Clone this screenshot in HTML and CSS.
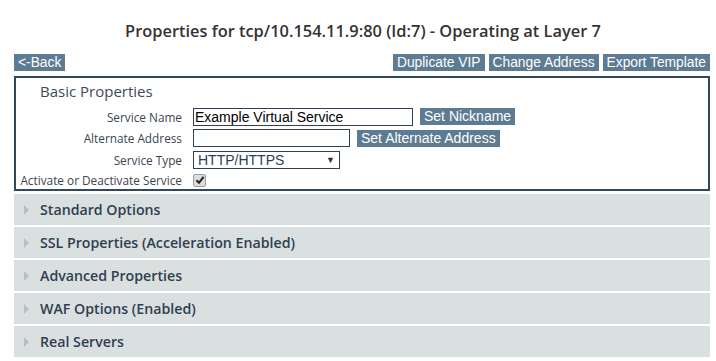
FILE: index.html
```html
<!DOCTYPE html>
<html>
<head>
<meta charset="utf-8">
<link rel="stylesheet" href="styles.css">
</head>
<body>
<div class="page">
  <h1 class="title">Properties for tcp/10.154.11.9:80 (Id:7) - Operating at Layer 7</h1>
  <div class="toolbar">
    <button class="btn">&lt;-Back</button>
    <div class="toolbar-right">
      <button class="btn">Duplicate VIP</button>
      <button class="btn">Change Address</button>
      <button class="btn">Export Template</button>
    </div>
  </div>
  <div class="box">
    <div class="box-title">Basic Properties</div>
    <div class="form">
      <div class="label">Service Name</div>
      <div class="ctrl"><div class="input w-name">Example Virtual Service</div><button class="btn btn-sm">Set Nickname</button></div>
      <div class="label">Alternate Address</div>
      <div class="ctrl"><div class="input w-alt"></div><button class="btn btn-sm">Set Alternate Address</button></div>
      <div class="label">Service Type</div>
      <div class="ctrl"><div class="select"><span>HTTP/HTTPS</span><span class="arrow">&#9660;</span></div></div>
      <div class="label">Activate or Deactivate Service</div>
      <div class="ctrl"><span class="checkbox"><svg width="10" height="10" viewBox="0 0 10 10"><path d="M1.5 5.2 L4 7.8 L8.6 1.8" fill="none" stroke="#222" stroke-width="2"/></svg></span></div>
    </div>
  </div>
  <div class="acc">
    <div class="acc-item"><span class="tri"></span>Standard Options</div>
    <div class="acc-item"><span class="tri"></span>SSL Properties (Acceleration Enabled)</div>
    <div class="acc-item"><span class="tri"></span>Advanced Properties</div>
    <div class="acc-item"><span class="tri"></span>WAF Options (Enabled)</div>
    <div class="acc-item"><span class="tri"></span>Real Servers</div>
  </div>
</div>
</body>
</html>
```
FILE: styles.css
```css
html, body { margin: 0; padding: 0; background: #fff; }
.page { padding: 0 6px 0 14px; font-family: "Open Sans", "Noto Sans", sans-serif; }
.title {
  margin: 0; padding: 20px 0 0 2px; height: 34px;
  text-align: center; font-size: 16.4px; font-weight: 600; color: #333;
  line-height: 22px;
}
.btn {
  border: 0; margin: 0; padding: 0 4px; height: 17px; line-height: 17px;
  background: #5d7b93; color: #fff; font-family: "Liberation Sans", Arial, sans-serif;
  font-size: 13.8px; cursor: pointer;
}
.btn-sm { padding: 0 4px; font-size: 14px; }
.toolbar { display: flex; justify-content: space-between; height: 17px; }
.toolbar-right { display: flex; gap: 4px; }
.box {
  margin-top: 5px; border: 2px solid #33475a; height: 111px; box-sizing: content-box;
}
.box-title { padding: 3px 0 0 24px; height: 25px; font-size: 15px; color: #3c4a58; line-height: 20px; box-sizing: content-box; }
.form {
  display: grid; grid-template-columns: 166px 1fr; column-gap: 11px;
  grid-template-rows: 21px 22px 22px 18px; align-items: center;
}
.label { text-align: right; font-size: 11.8px; color: #3b4652; white-space: nowrap; }
.ctrl { display: flex; align-items: center; gap: 7px; }
.input {
  height: 16px; border: 1px solid #2f4152; font-family: "Liberation Sans", Arial, sans-serif;
  font-size: 14px; line-height: 16px; padding-left: 1px; color: #000; box-sizing: content-box;
}
.w-name { width: 217px; }
.w-alt { width: 154px; }
.select {
  border: 1px solid #2f4152; display: flex; justify-content: space-between;
  align-items: center; font-family: "Liberation Sans", Arial, sans-serif; font-size: 14px; color: #2c3e52;
  padding-left: 4px; box-sizing: border-box; width: 147px; height: 18px; padding-right: 4px;
}
.arrow { font-size: 9px; color: #333; }
.checkbox {
  width: 11px; height: 11px; border: 1px solid #9aa0a6; border-radius: 2px; background: #dcdcdc;
  display: flex; align-items: center; justify-content: center;
}
.acc { margin-top: 3px; display: flex; flex-direction: column; gap: 2px; }
.acc-item {
  height: 31px; background: #dadfe0; display: flex; align-items: center;
  font-size: 14.2px; font-weight: 600; color: #2f3f50;
}
.tri {
  width: 0; height: 0; border-top: 5px solid transparent; border-bottom: 5px solid transparent;
  border-left: 5px solid #b9bec1; margin: 0 11px 0 10px;
}
```
